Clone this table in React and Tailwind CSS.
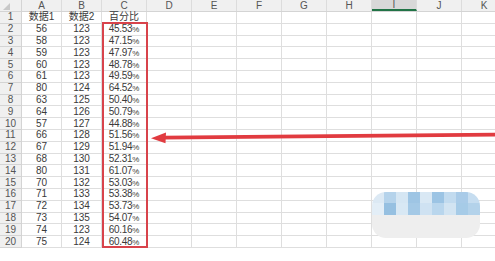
import React from 'react';

const cols = [
  { k: 'A', w: 'w-[40px]' },
  { k: 'B', w: 'w-[40px]' },
  { k: 'C', w: 'w-[45px]' },
  { k: 'D', w: 'w-[45px]' },
  { k: 'E', w: 'w-[45px]' },
  { k: 'F', w: 'w-[45px]' },
  { k: 'G', w: 'w-[45px]' },
  { k: 'H', w: 'w-[45px]' },
  { k: 'I', w: 'w-[45px]' },
  { k: 'J', w: 'w-[45px]' },
  { k: 'K', w: 'w-[45px]' },
];

const rows = [
  ['数据1', '数据2', '百分比'],
  ['56', '123', '45.53%'],
  ['58', '123', '47.15%'],
  ['59', '123', '47.97%'],
  ['60', '123', '48.78%'],
  ['61', '123', '49.59%'],
  ['80', '124', '64.52%'],
  ['63', '125', '50.40%'],
  ['64', '126', '50.79%'],
  ['57', '127', '44.88%'],
  ['66', '128', '51.56%'],
  ['67', '129', '51.94%'],
  ['68', '130', '52.31%'],
  ['80', '131', '61.07%'],
  ['70', '132', '53.03%'],
  ['71', '133', '53.38%'],
  ['72', '134', '53.73%'],
  ['73', '135', '54.07%'],
  ['74', '123', '60.16%'],
  ['75', '124', '60.48%'],
];

// blurred mosaic blocks of the watermark
const topA = ['bg-[#dce9f4]', 'bg-[#b5d3eb]', 'bg-[#d5e6f3]', 'bg-[#9ec5e4]', 'bg-[#d9e8f4]', 'bg-[#9cc4e4]', 'bg-[#c2dbef]', 'bg-[#a9cbe8]', 'bg-[#c6ddf0]'];
const topB = ['bg-[#e3eef7]', 'bg-[#96c0e1]', 'bg-[#d8e8f4]', 'bg-[#a4c9e6]', 'bg-[#cfe2f2]', 'bg-[#b9d6ed]', 'bg-[#d2e4f2]', 'bg-[#a6cbe7]', 'bg-[#b3d2ea]'];

const Cell = ({ value }) => {
  if (value.endsWith('%')) {
    return (
      <span className="tracking-[-0.3px]">
        {value.slice(0, -1)}
        <span className="text-[8px]">%</span>
      </span>
    );
  }
  return value;
};

const App = () => {
  return (
    <div className="relative w-[495px] h-[261px] overflow-hidden bg-white text-[10px] text-[#3a3a3a] font-['Liberation_Sans','Noto_Sans_CJK_SC',sans-serif]">
      {/* column header */}
      <div className="flex h-[12px] bg-[#f0f0f0] border-b border-[#d4d4d4]">
        <div className="relative w-[22px] shrink-0 border-r border-[#d4d4d4]">
          <svg width="8" height="8" viewBox="0 0 8 8" className="absolute left-[3px] top-[3px]">
            <polygon points="7,0 7,7 0,7" fill="#c8c8c8" />
          </svg>
        </div>
        {cols.map((c) => (
          <div
            key={c.k}
            className={`${c.w} shrink-0 flex items-center justify-center border-r border-[#dcdcdc] text-[#555] leading-none ${
              c.k === 'I' ? 'bg-[#d8d8d8] border-b-2 border-b-[#217346]' : ''
            }`}
          >
            {c.k}
          </div>
        ))}
      </div>

      {rows.map((r, i) => (
        <div key={i} className="flex h-[11.8px]">
          <div className="w-[22px] shrink-0 flex items-center justify-center bg-[#f0f0f0] border-r border-b border-[#d4d4d4] text-[#555] leading-none">
            {i + 1}
          </div>
          {cols.map((c, j) => (
            <div
              key={c.k}
              className={`${c.w} shrink-0 flex items-center justify-center border-r border-b border-[#dedede] leading-none`}
            >
              {r[j] ? <Cell value={r[j]} /> : ''}
            </div>
          ))}
        </div>
      ))}

      {/* highlight box around column C */}
      <div className="absolute left-[102px] top-[22px] w-[46px] h-[226px] border-2 border-[#d8434b]" />

      {/* arrow */}
      <svg className="absolute left-0 top-0" width="495" height="261" viewBox="0 0 495 261">
        <line x1="163" y1="137.6" x2="495" y2="134.6" stroke="#e13b40" strokeWidth="3.6" />
        <polygon points="151,138.2 166,132.4 165.5,143.2" fill="#e13b40" />
      </svg>

      {/* blurred watermark */}
      <div className="absolute left-[372px] top-[192px] w-[108px] h-[46px] rounded-[14px] overflow-hidden flex flex-col">
        <div className="flex h-[11px]">
          {topA.map((c, i) => (
            <div key={i} className={`flex-1 ${c}`} />
          ))}
        </div>
        <div className="flex h-[12px]">
          {topB.map((c, i) => (
            <div key={i} className={`flex-1 ${c}`} />
          ))}
        </div>
        <div className="flex-1 bg-[#eeeeee]" />
      </div>
    </div>
  );
};

export default App;
